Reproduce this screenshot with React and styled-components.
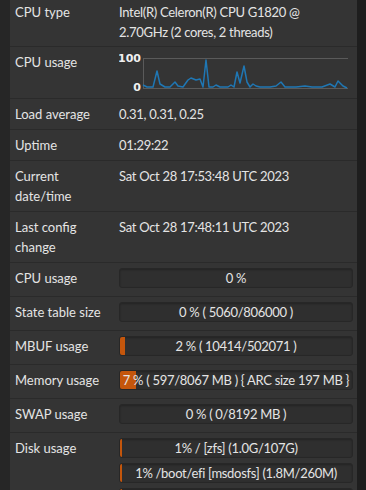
import React from 'react';
import styled, { createGlobalStyle } from 'styled-components';

const GlobalStyle = createGlobalStyle`
  html, body {
    margin: 0;
    padding: 0;
    background: #262626;
    overflow: hidden;
  }
  body {
    font-family: Lato, "Noto Sans", sans-serif;
  }
`;

const Styled = {
  Page: styled.div`
    display: flex;
    width: 366px;
    height: 490px;
    overflow: hidden;
    background: #262626;
  `,
  Gutter: styled.div`
    width: 10px;
    flex: none;
    background: #262626;
  `,
  Scrollbar: styled.div`
    width: 9px;
    flex: none;
    background: #1e1e1e;
  `,
  Panel: styled.div`
    flex: 1;
    min-width: 0;
    background: #343434;
    color: #e4e4e4;
    font-size: 13px;
    line-height: 20px;
  `,
  Row: styled.div`
    display: grid;
    grid-template-columns: 104px 1fr;
    padding: ${p => (p.$first ? '2px' : '5px')} 4px ${p => (p.$bar ? '8px' : p.$first ? '4px' : '5px')} 5px;
    border-bottom: 1px solid #2a2a2a;
  `,
  Label: styled.div`
    padding-right: 8px;
    color: #e4e4e4;
  `,
  Value: styled.div`
    display: flex;
    flex-direction: column;
    gap: 5px;
    min-width: 0;
    letter-spacing: -0.3px;
  `,
  Text: styled.div`
    padding-right: 8px;
  `,
  Bar: styled.div`
    position: relative;
    height: 20px;
    box-sizing: border-box;
    background: #2f2f2f;
    border: 1px solid #272727;
    border-radius: 3px;
    box-shadow: inset 0 1px 2px rgba(0, 0, 0, 0.25);
    overflow: hidden;
  `,
  Fill: styled.div`
    position: absolute;
    left: 0;
    top: 0;
    bottom: 0;
    background: #c4560c;
  `,
  BarText: styled.div`
    position: relative;
    text-align: center;
    line-height: 18px;
    white-space: nowrap;
    color: #e4e4e4;
  `,
  Chart: styled.div`
    display: flex;
    height: 41px;
  `,
};

const cpuPoints = [
  [143, 85], [147, 87], [153, 87], [157, 71], [160, 84], [165, 87], [170, 87], [175, 82],
  [178, 86], [183, 87], [188, 80], [191, 78], [196, 80], [200, 79], [203, 87], [206, 60],
  [209, 87], [213, 87], [216, 85], [220, 87], [228, 87], [231, 85], [234, 87], [237, 72],
  [240, 83], [244, 66], [247, 82], [250, 87], [253, 84], [256, 86], [260, 87], [270, 87],
  [276, 86], [281, 82], [285, 87], [296, 87], [305, 86], [312, 87], [322, 87], [330, 84],
  [335, 87], [338, 81], [343, 86], [347, 88],
];

const CpuChart = () => (
  <svg width="234" height="41" viewBox="119 52 234 41">
    <g fill="#f0f0f0" fontFamily="'DejaVu Sans', sans-serif" fontWeight="bold" fontSize="11">
      <text x="141" y="62" textAnchor="end">100</text>
      <text x="141" y="91" textAnchor="end">0</text>
    </g>
    <line x1="143.5" y1="58.5" x2="348" y2="58.5" stroke="#5a5a5a" strokeWidth="1" />
    <line x1="143.5" y1="58" x2="143.5" y2="88.5" stroke="#5a5a5a" strokeWidth="1" />
    <line x1="143" y1="88.5" x2="348" y2="88.5" stroke="#5a5a5a" strokeWidth="1" />
    <polyline
      points={cpuPoints.map(p => p.join(',')).join(' ')}
      fill="none"
      stroke="#1f77b4"
      strokeWidth="1.5"
      strokeLinejoin="round"
    />
  </svg>
);

const ProgressBar = ({ pct, children }) => (
  <Styled.Bar>
    <Styled.Fill style={{ width: `${pct}%` }} />
    <Styled.BarText>{children}</Styled.BarText>
  </Styled.Bar>
);

const textRows = [
  { label: 'Load average', value: '0.31, 0.31, 0.25' },
  { label: 'Uptime', value: '01:29:22' },
  { label: 'Current date/time', value: 'Sat Oct 28 17:53:48 UTC 2023' },
  { label: 'Last config change', value: 'Sat Oct 28 17:48:11 UTC 2023' },
];

const barRows = [
  { label: 'CPU usage', bars: [{ pct: 0, text: '0 %' }] },
  { label: 'State table size', bars: [{ pct: 0, text: '0 % ( 5060/806000 )' }] },
  { label: 'MBUF usage', bars: [{ pct: 2, text: '2 % ( 10414/502071 )' }] },
  { label: 'Memory usage', bars: [{ pct: 7, text: '7 % ( 597/8067 MB ) { ARC size 197 MB }' }] },
  { label: 'SWAP usage', bars: [{ pct: 0, text: '0 % ( 0/8192 MB )' }] },
  {
    label: 'Disk usage',
    bars: [
      { pct: 1, text: '1% / [zfs] (1.0G/107G)' },
      { pct: 1, text: '1% /boot/efi [msdosfs] (1.8M/260M)' },
      { pct: 1, text: '' },
    ],
  },
];

export default function App() {
  return (
    <Styled.Page>
      <GlobalStyle />
      <Styled.Gutter />
      <Styled.Panel>
        <Styled.Row $first>
          <Styled.Label>CPU type</Styled.Label>
          <Styled.Value>
            <Styled.Text>Intel(R) Celeron(R) CPU G1820 @ 2.70GHz (2 cores, 2 threads)</Styled.Text>
          </Styled.Value>
        </Styled.Row>
        <Styled.Row>
          <Styled.Label>CPU usage</Styled.Label>
          <Styled.Chart>
            <CpuChart />
          </Styled.Chart>
        </Styled.Row>
        {textRows.map(r => (
          <Styled.Row key={r.label}>
            <Styled.Label>{r.label}</Styled.Label>
            <Styled.Value>
              <Styled.Text>{r.value}</Styled.Text>
            </Styled.Value>
          </Styled.Row>
        ))}
        {barRows.map(r => (
          <Styled.Row key={r.label} $bar>
            <Styled.Label>{r.label}</Styled.Label>
            <Styled.Value>
              {r.bars.map((b, i) => (
                <ProgressBar key={i} pct={b.pct}>{b.text}</ProgressBar>
              ))}
            </Styled.Value>
          </Styled.Row>
        ))}
      </Styled.Panel>
      <Styled.Scrollbar />
    </Styled.Page>
  );
}
